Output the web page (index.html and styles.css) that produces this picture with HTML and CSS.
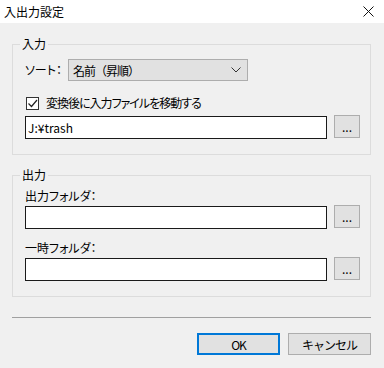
FILE: index.html
```html
<!DOCTYPE html>
<html lang="ja">
<head>
  <meta charset="UTF-8" />
  <title>入出力設定</title>
  <link rel="stylesheet" href="styles.css">
</head>
<body>
  <div class="dialog">
    <!-- Title bar -->
    <div class="titlebar">
      <span class="title">入出力設定</span>
      <svg class="close" width="11" height="11" viewBox="0 0 11 11">
        <path d="M0.5 0.5 L10.5 10.5 M10.5 0.5 L0.5 10.5" stroke="#111" stroke-width="1" fill="none" />
      </svg>
    </div>

    <div class="client">
      <!-- Input group -->
      <fieldset class="group group-in">
        <legend>入力</legend>
        <div class="sort-row">
          <span class="label">ソート：</span>
          <div class="combo">
            <span class="combo-text">名前（昇順）</span>
            <svg width="10" height="6" viewBox="0 0 10 6">
              <path d="M0.5 0.5 L5 5 L9.5 0.5" stroke="#333" stroke-width="1" fill="none" />
            </svg>
          </div>
        </div>
        <label class="check-row">
          <span class="checkbox">
            <svg width="11" height="11" viewBox="0 0 11 11">
              <path d="M1.5 5.5 L4.5 8.5 L10 2" stroke="#222" stroke-width="1.2" fill="none" />
            </svg>
          </span>
          <span class="check-text">変換後に入力ファイルを移動する</span>
        </label>
        <div class="path-row">
          <div class="textbox">J:¥trash</div>
          <button class="browse">...</button>
        </div>
      </fieldset>

      <!-- Output group -->
      <fieldset class="group group-out">
        <legend>出力</legend>
        <div class="field-label">出力フォルダ：</div>
        <div class="path-row">
          <div class="textbox"></div>
          <button class="browse">...</button>
        </div>
        <div class="field-label second">一時フォルダ：</div>
        <div class="path-row">
          <div class="textbox"></div>
          <button class="browse">...</button>
        </div>
      </fieldset>

      <div class="separator"></div>

      <div class="actions">
        <button class="btn btn-default">OK</button>
        <button class="btn">キャンセル</button>
      </div>
    </div>
  </div>
</body>
</html>
```

FILE: styles.css
```css
* {
  margin: 0;
  padding: 0;
  box-sizing: border-box;
}

body {
  font-family: "Noto Sans CJK JP", "Noto Sans", sans-serif;
  font-size: 12px;
  font-feature-settings: "palt";
  color: #000;
  background: #f0f0f0;
  width: 384px;
  height: 368px;
  overflow: hidden;
}

.dialog {
  width: 384px;
  height: 368px;
  display: flex;
  flex-direction: column;
}

.titlebar {
  height: 23px;
  background: #fff;
  display: flex;
  align-items: center;
  justify-content: space-between;
  padding: 0 10px 0 4px;
}

.title {
  font-size: 12px;
  line-height: 16px;
  color: #000;
}

.close {
  display: block;
}

.client {
  flex: 1;
  padding: 13px 13px 0 12px;
  display: flex;
  flex-direction: column;
}

.group {
  border: 1px solid #dcdcdc;
  padding: 0 10px 0 12px;
}

.group legend {
  margin-left: -5px;
  padding: 0 2px;
  line-height: 16px;
  color: #000;
}

.group-in {
  padding-bottom: 15px;
}

.group-out {
  margin-top: 12px;
  padding-bottom: 15px;
}

.sort-row {
  display: flex;
  align-items: center;
  margin-top: 7px;
}

.sort-row .label {
  width: 43px;
  flex-shrink: 0;
  white-space: nowrap;
  line-height: 16px;
}

.combo {
  width: 180px;
  height: 22px;
  background: #e1e1e1;
  border: 1px solid #adadad;
  display: flex;
  align-items: center;
  justify-content: space-between;
  padding: 0 6px 0 4px;
}

.combo-text {
  font-feature-settings: normal;
  letter-spacing: -1px;
}

.combo svg {
  display: block;
}

.check-row {
  display: flex;
  align-items: center;
  gap: 7px;
  margin-top: 14px;
  line-height: 16px;
  padding-left: 1px;
}

.check-text {
  letter-spacing: -1px;
}

.checkbox {
  width: 13px;
  height: 13px;
  border: 1px solid #333;
  background: #fff;
  display: flex;
  align-items: center;
  justify-content: center;
}

.checkbox svg {
  display: block;
}

.path-row {
  display: flex;
  align-items: flex-start;
  gap: 7px;
  margin-top: 4px;
}

.textbox {
  width: 302px;
  height: 23px;
  margin-top: 1px;
  background: #fff;
  border: 1px solid #1a1a1a;
  padding: 0 2px;
  line-height: 21px;
}

.browse {
  width: 26px;
  height: 23px;
  background: #e1e1e1;
  border: 1px solid #adadad;
  font-family: inherit;
  font-size: 12px;
  line-height: 18px;
  color: #000;
}

.field-label {
  line-height: 16px;
  margin-top: 5px;
}

.field-label + .path-row {
  margin-top: 1px;
}

.field-label.second {
  margin-top: 11px;
}

.separator {
  height: 1px;
  background: #a0a0a0;
  margin-top: 20px;
}

.actions {
  display: flex;
  justify-content: flex-end;
  gap: 8px;
  margin-top: 15px;
}

.btn {
  width: 83px;
  height: 22px;
  background: #e1e1e1;
  border: 1px solid #adadad;
  font-family: inherit;
  font-size: 12px;
  letter-spacing: -1px;
  color: #000;
}

.btn-default {
  border: 2px solid #0078d7;
}
```
